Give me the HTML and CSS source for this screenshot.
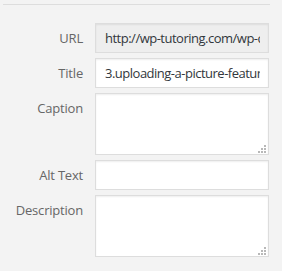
FILE: index.html
```html
<!DOCTYPE html>
<html>
<head>
<meta charset="utf-8">
<link rel="stylesheet" href="styles.css">
</head>
<body>
<div class="panel">
  <div class="divider"></div>
  <div class="settings">
    <label class="name" for="f-url">URL</label>
    <input id="f-url" class="field readonly" type="text" value="http://wp-tutoring.com/wp-content/uploads/2015/03/3.uploading-a-picture-featured.png" readonly>

    <label class="name" for="f-title">Title</label>
    <input id="f-title" class="field" type="text" value="3.uploading-a-picture-featured-image">

    <label class="name" for="f-caption">Caption</label>
    <div class="area-wrap"><textarea id="f-caption" class="field area"></textarea><span class="grip"></span></div>

    <label class="name" for="f-alt">Alt Text</label>
    <input id="f-alt" class="field" type="text" value="">

    <label class="name" for="f-desc">Description</label>
    <div class="area-wrap"><textarea id="f-desc" class="field area"></textarea><span class="grip"></span></div>
  </div>
</div>
</body>
</html>
```
FILE: styles.css
```css
html, body {
  margin: 0;
  padding: 0;
  background: #f3f3f3;
}
body {
  font-family: "Open Sans", "Noto Sans", sans-serif;
  font-size: 13px;
  line-height: 18px;
}
.panel {
  padding: 4px 0 0 3px;
  width: 267px;
}
.divider {
  height: 0;
  border-top: 1px solid #dddddd;
}
.settings {
  margin-top: 18px;
  display: grid;
  grid-template-columns: 80px 174px;
  column-gap: 12px;
  row-gap: 5px;
}
.name {
  text-align: right;
  color: #666666;
  padding-top: 6px;
  letter-spacing: -0.2px;
}
.field {
  box-sizing: border-box;
  display: block;
  width: 174px;
  height: 30px;
  margin: 0;
  padding: 0 8px 0 9px;
  border: 1px solid #dddddd;
  background: #ffffff;
  color: #32373c;
  font-family: "Open Sans", "Noto Sans", sans-serif;
  font-size: 13px;
  letter-spacing: -0.5px;
  box-shadow: inset 0 1px 2px rgba(0, 0, 0, 0.07);
  outline: none;
  border-radius: 0;
}
.readonly {
  background: #eeeeee;
}
.area-wrap {
  position: relative;
  width: 174px;
  height: 62px;
}
.area {
  height: 62px;
  resize: none;
  padding: 6px 8px;
}
.grip {
  position: absolute;
  right: 3px;
  bottom: 2px;
  width: 8px;
  height: 8px;
  background-image:
    linear-gradient(#b8b8b8, #b8b8b8),
    linear-gradient(#b8b8b8, #b8b8b8),
    linear-gradient(#b8b8b8, #b8b8b8),
    linear-gradient(#b8b8b8, #b8b8b8),
    linear-gradient(#b8b8b8, #b8b8b8),
    linear-gradient(#b8b8b8, #b8b8b8);
  background-size: 2px 2px;
  background-repeat: no-repeat;
  background-position:
    6px 0,
    3px 3px, 6px 3px,
    0 6px, 3px 6px, 6px 6px;
}
```
